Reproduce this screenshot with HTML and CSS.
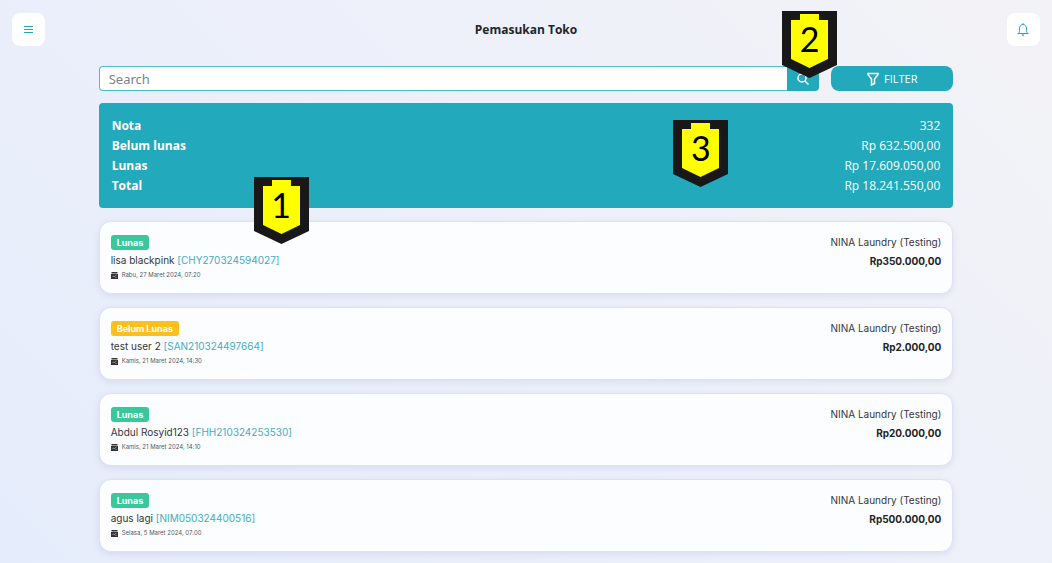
FILE: index.html
```html
<!DOCTYPE html>
<html lang="id">
<head>
  <meta charset="utf-8">
  <meta name="viewport" content="width=device-width, initial-scale=1">
  <title>Pemasukan Toko</title>
  <link rel="stylesheet" href="styles.css">
</head>
<body>

  <svg class="sprite" aria-hidden="true">
    <symbol id="calendar" viewBox="0 0 14 14">
      <path fill="currentColor" d="M1 0h12v3H1zM0 4h14v10H0z"/>
      <path fill="none" stroke="#fff" d="M3 10l2-2 2 1 4-3M9 11h2"/>
    </symbol>
    <symbol id="marker" viewBox="0 0 55 67">
      <path fill="#181818" d="M0 0h55v54L27.500 67 0 54z"/>
      <path fill="#ffff00" d="M18 3h19v6h9v39l-18.500 9L9 48V9h9z"/>
    </symbol>
  </svg>

  <header class="header">
    <button type="button" class="icon-btn" aria-label="Menu">
      <svg width="10" height="10" viewBox="0 0 10 10"><path d="M0 1.500h9M0 4.500h9M0 7.500h9"/></svg>
    </button>
    <h1>Pemasukan Toko</h1>
    <button type="button" class="icon-btn" aria-label="Notifikasi">
      <svg width="12" height="14" viewBox="0 0 12 14"><path d="M6 0v1.500M.5 10.500h11M1.500 10.500c1-1 1-2.500 1-4.500 0-3 1.500-4.500 3.500-4.500S9.500 3 9.500 6c0 2 0 3.500 1 4.500"/><path d="M4.500 11.500h3L6 13.500z" fill="#20a8b8" stroke="none"/></svg>
    </button>
  </header>

  <main class="container">
    <form class="toolbar" action="#">
      <div class="search">
        <input type="text" name="search" placeholder="Search" aria-label="Search">
        <button type="submit" class="search-btn" aria-label="Cari">
          <svg width="12" height="12" viewBox="0 0 12 12"><circle cx="5" cy="5" r="4"/><path d="M8 8l3.500 3.500"/></svg>
          <span class="marker marker-top"><svg><use href="#marker"/></svg><b>2</b></span>
        </button>
      </div>
      <button type="button" class="filter-btn">
        <svg width="12" height="14" viewBox="0 0 12 14"><path d="M1 1.500h10v1L7.500 7v4.500l-3 1.500V7L1 2.500z"/></svg>
        FILTER
      </button>
    </form>

    <section class="summary">
      <dl>
        <dt>Nota</dt><dd>332</dd>
        <dt>Belum lunas</dt><dd>Rp 632.500,00</dd>
        <dt>Lunas</dt><dd>Rp 17.609.050,00</dd>
        <dt>Total</dt><dd>Rp 18.241.550,00</dd>
      </dl>
      <span class="marker marker-left"><svg><use href="#marker"/></svg><b>1</b></span>
      <span class="marker marker-right"><svg><use href="#marker"/></svg><b>3</b></span>
    </section>

    <article class="card">
      <div>
        <span class="badge paid">Lunas</span>
        <p class="name">lisa blackpink <a href="#">[CHY270324594027]</a></p>
        <p class="date"><svg><use href="#calendar"/></svg>Rabu, 27 Maret 2024, 07:20</p>
      </div>
      <div class="right">
        <p>NINA Laundry (Testing)</p>
        <p class="price">Rp350.000,00</p>
      </div>
    </article>

    <article class="card">
      <div>
        <span class="badge unpaid">Belum Lunas</span>
        <p class="name">test user 2 <a href="#">[SAN210324497664]</a></p>
        <p class="date"><svg><use href="#calendar"/></svg>Kamis, 21 Maret 2024, 14:30</p>
      </div>
      <div class="right">
        <p>NINA Laundry (Testing)</p>
        <p class="price">Rp2.000,00</p>
      </div>
    </article>

    <article class="card">
      <div>
        <span class="badge paid">Lunas</span>
        <p class="name">Abdul Rosyid123 <a href="#">[FHH210324253530]</a></p>
        <p class="date"><svg><use href="#calendar"/></svg>Kamis, 21 Maret 2024, 14:10</p>
      </div>
      <div class="right">
        <p>NINA Laundry (Testing)</p>
        <p class="price">Rp20.000,00</p>
      </div>
    </article>

    <article class="card">
      <div>
        <span class="badge paid">Lunas</span>
        <p class="name">agus lagi <a href="#">[NIM050324400516]</a></p>
        <p class="date"><svg><use href="#calendar"/></svg>Selasa, 5 Maret 2024, 07:00</p>
      </div>
      <div class="right">
        <p>NINA Laundry (Testing)</p>
        <p class="price">Rp500.000,00</p>
      </div>
    </article>
  </main>

</body>
</html>
```
FILE: styles.css
```css
* {
  box-sizing: border-box;
}

body {
  margin: 0;
  min-height: 100vh;
  font-family: "Open Sans", "Noto Sans", sans-serif;
  color: #212529;
  background: linear-gradient(45deg, #e5ecfb 0%, #edf0fa 55%, #f3f3f6 100%);
}

h1, p, dl, dd {
  margin: 0;
}

button {
  font-family: inherit;
  cursor: pointer;
}

a {
  color: #45acbd;
  text-decoration: none;
}

.sprite {
  position: absolute;
  width: 0;
  height: 0;
}

.header {
  display: flex;
  justify-content: space-between;
  align-items: center;
  padding: 13px 12px 0;
}

.header h1 {
  font-size: 12px;
  line-height: 20px;
  font-weight: 700;
}

.icon-btn {
  display: flex;
  align-items: center;
  justify-content: center;
  width: 33px;
  height: 33px;
  padding: 0;
  border: none;
  border-radius: 8px;
  background: #fff;
}

.icon-btn svg,
.search-btn > svg,
.filter-btn svg {
  fill: none;
  stroke: #20a8b8;
}

.container {
  width: 83.333%;
  margin: 0 auto;
  padding: 20px 11px 0;
}

.toolbar {
  display: flex;
  gap: 12px;
}

.search {
  display: flex;
  flex: 1;
}

.search input {
  flex: 1;
  min-width: 0;
  height: 25px;
  padding: 0 9px;
  border: 1px solid #4bbfcd;
  border-right: none;
  border-radius: 4px 0 0 4px;
  font: 13px "Noto Sans", sans-serif;
  outline: none;
}

.search input::placeholder {
  color: #7d8389;
}

.search-btn {
  position: relative;
  display: flex;
  align-items: center;
  justify-content: center;
  width: 32px;
  padding: 0;
  border: none;
  border-radius: 0 4px 4px 0;
  background: #22a9bb;
}

.search-btn > svg,
.filter-btn svg {
  stroke: #fff;
  stroke-width: 1.5;
}

.filter-btn {
  display: flex;
  align-items: center;
  justify-content: center;
  gap: 5px;
  width: 14.3%;
  border: none;
  border-radius: 8px;
  background: #22a9bb;
  color: #fff;
  font-size: 11px;
}

.summary {
  position: relative;
  margin: 12px 0 13px;
  padding: 13px 13px 12px;
  border-radius: 4px;
  background: #22a9bb;
  color: #fff;
}

.summary dl {
  display: grid;
  grid-template-columns: 1fr auto;
  font-size: 12px;
  line-height: 20px;
}

.summary dt {
  font-weight: 700;
}

.summary dd {
  font-weight: 500;
  text-align: right;
}

/* numbered markers */
.marker {
  position: absolute;
  width: 55px;
  height: 67px;
  color: #000;
}

.marker svg {
  display: block;
  width: 100%;
  height: 100%;
}

.marker b {
  position: absolute;
  top: 8px;
  left: 0;
  width: 100%;
  font: 34px/40px Lato, sans-serif;
  text-align: center;
}

.marker-top {
  left: -5px;
  bottom: 13px;
}

.marker-left {
  left: 155px;
  top: 74px;
}

.marker-right {
  right: 225px;
  top: 17px;
}

.card {
  display: flex;
  justify-content: space-between;
  margin-bottom: 13px;
  padding: 13px 11px 14px;
  border: 1px solid #dde2f3;
  border-radius: 12px;
  background: #fcfdff;
  box-shadow: 0 2px 6px rgba(80, 90, 160, 0.12);
  color: #33373b;
  font-family: Inter, sans-serif;
  font-size: 10px;
  line-height: 19px;
}

.card:last-child {
  margin-bottom: 0;
}

.badge {
  display: block;
  width: fit-content;
  padding: 0 6px;
  border-radius: 3px;
  color: #fff;
  font-size: 9px;
  line-height: 15px;
  font-weight: 700;
}

.paid {
  background: #3ac79b;
}

.unpaid {
  background: #ffbf1a;
}

.name {
  line-height: 21px;
}

.date {
  display: flex;
  align-items: center;
  gap: 4px;
  color: #55595e;
  font-size: 6px;
  line-height: 8px;
}

.date svg {
  width: 7px;
  height: 7px;
  color: #333;
}

.right {
  margin-top: -2px;
  text-align: right;
}

.price {
  color: #212529;
  font-weight: 700;
}
```
